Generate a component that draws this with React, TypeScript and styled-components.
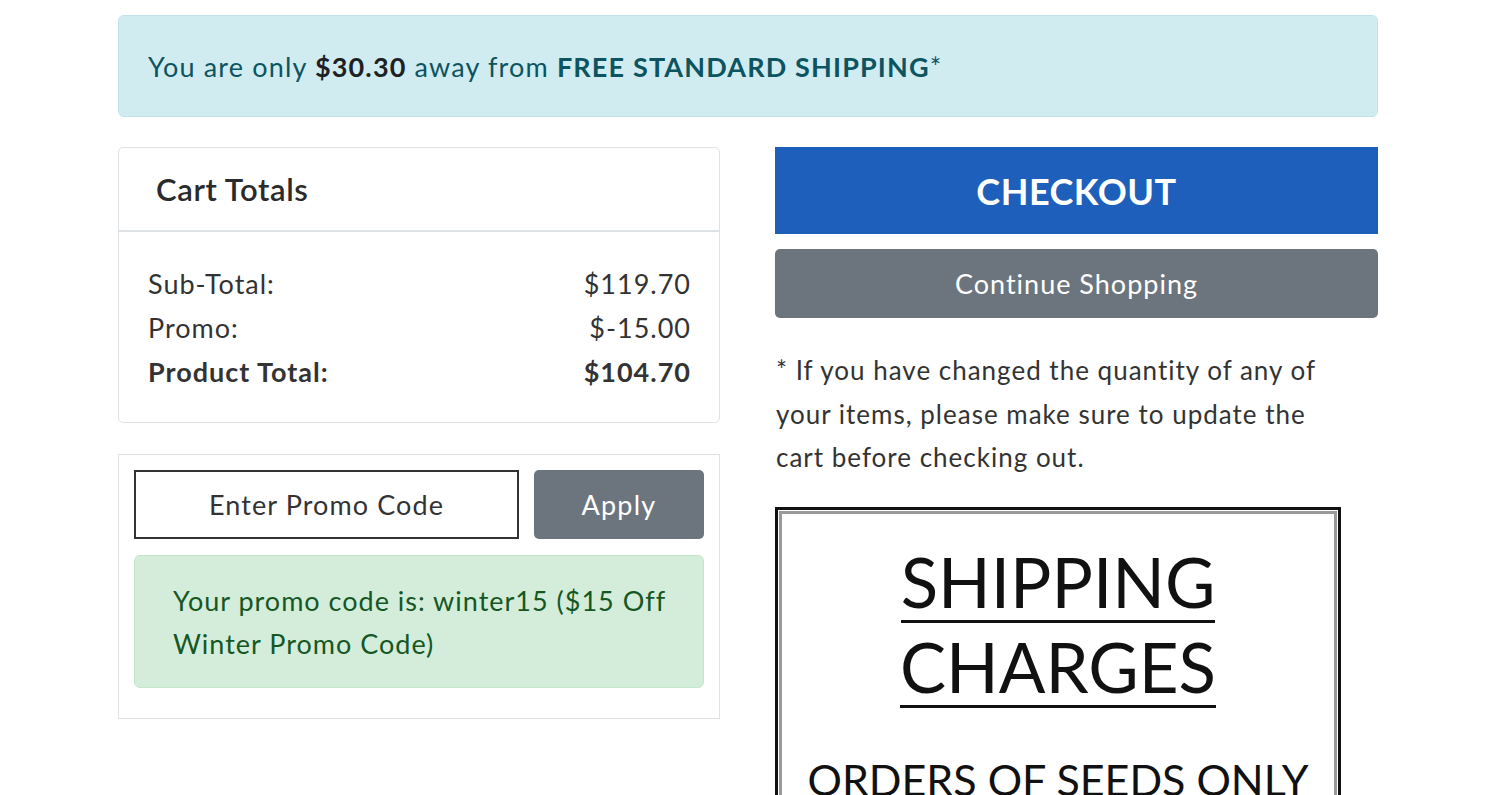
import React from "react";
import styled, { createGlobalStyle } from "styled-components";

const GlobalStyle = createGlobalStyle`
  body {
    margin: 0;
    background: #ffffff;
    font-family: Lato, "Open Sans", sans-serif;
    color: #333333;
  }
`;

const Page = styled.div`
  width: 1260px;
  padding: 15px 0 0 118px;
`;

const InfoBar = styled.div`
  height: 102px;
  box-sizing: border-box;
  border: 1px solid #bee5eb;
  border-radius: 6px;
  background: #d1ecf1;
  color: #0c5460;
  font-size: 27px;
  letter-spacing: 1.15px;
  display: flex;
  align-items: center;
  padding-left: 29px;
  margin-bottom: 30px;
`;

const Strong = styled.b<{ dark?: boolean }>`
  font-weight: 700;
  color: ${(p) => (p.dark ? "#1d2124" : "#0c5460")};
`;

const Columns = styled.div`
  display: grid;
  grid-template-columns: 602px 603px;
  justify-content: space-between;
  align-items: start;
`;

const Column = styled.div`
  display: flex;
  flex-direction: column;
`;

const Card = styled.div`
  border: 1px solid #dfe2e5;
  border-radius: 5px;
  background: #fff;
`;

const CardHeader = styled.div`
  height: 84px;
  box-sizing: border-box;
  border-bottom: 2px solid #dfe2e5;
  display: flex;
  align-items: center;
  padding-left: 37px;
  font-size: 31px;
  font-weight: 600;
  letter-spacing: 0.6px;
  color: #2b2b2b;
`;

const CardBody = styled.div`
  padding: 30px 28px 28px 29px;
`;

const TotalRow = styled.div<{ bold?: boolean }>`
  display: flex;
  justify-content: space-between;
  font-size: 27px;
  line-height: 44px;
  letter-spacing: 1px;
  font-weight: ${(p) => (p.bold ? 700 : 400)};
  color: #333;
`;

const PromoCard = styled.div`
  margin-top: 31px;
  border: 1px solid #dfe2e5;
  padding: 15px 15px 30px 15px;
`;

const PromoForm = styled.div`
  display: flex;
  gap: 15px;
`;

const PromoInput = styled.div`
  width: 385px;
  height: 69px;
  box-sizing: border-box;
  border: 2px solid #333;
  display: flex;
  align-items: center;
  justify-content: center;
  font-size: 27px;
  letter-spacing: 1.1px;
  color: #333;
`;

const GreyButton = styled.button`
  height: 69px;
  border: none;
  border-radius: 5px;
  background: #6c757d;
  color: #fff;
  font-family: Lato, sans-serif;
  font-size: 27px;
  letter-spacing: 1px;
  padding: 0;
`;

const ApplyButton = styled(GreyButton)`
  width: 170px;
  letter-spacing: 1.2px;
`;

const SuccessBox = styled.div`
  margin-top: 16px;
  border: 1px solid #c3e6cb;
  border-radius: 6px;
  background: #d4edda;
  color: #155724;
  font-size: 27px;
  letter-spacing: 1px;
  line-height: 43px;
  padding: 23px 30px 22px 38px;
`;

const CheckoutButton = styled.button`
  height: 87px;
  border: none;
  background: #1e5fbb;
  color: #fff;
  font-family: Lato, sans-serif;
  font-weight: 700;
  font-size: 36px;
  letter-spacing: 0.5px;
  padding: 0;
`;

const ContinueButton = styled(GreyButton)`
  margin-top: 15px;
  width: 100%;
`;

const Note = styled.p`
  max-width: 565px;
  margin: 31px 0 0 1px;
  font-size: 26px;
  letter-spacing: 1px;
  line-height: 43.5px;
  color: #333;
`;

const Poster = styled.div`
  margin-top: 27px;
  width: 566px;
  height: 320px;
  box-sizing: border-box;
  border: 3px solid #111;
  padding: 1px;
`;

const PosterInner = styled.div`
  height: 100%;
  box-sizing: border-box;
  border: 3px solid #9a9a9a;
  display: flex;
  flex-direction: column;
  align-items: center;
  padding-top: 30px;
  color: #111;
`;

const PosterTitle = styled.div`
  font-size: 69px;
  line-height: 76px;
  border-bottom: 3px solid #111;
  margin-bottom: 6px;
`;

const PosterLine = styled.div`
  margin-top: 41px;
  font-size: 43px;
  line-height: 50px;
  white-space: nowrap;
`;

export default function App() {
  return (
    <>
      <GlobalStyle />
      <Page>
        <InfoBar>
          <span>
            You are only <Strong dark>$30.30</Strong> away from{" "}
            <Strong>FREE STANDARD SHIPPING</Strong>*
          </span>
        </InfoBar>
        <Columns>
          <Column>
            <Card>
              <CardHeader>Cart Totals</CardHeader>
              <CardBody>
                <TotalRow>
                  <span>Sub-Total:</span>
                  <span>$119.70</span>
                </TotalRow>
                <TotalRow>
                  <span>Promo:</span>
                  <span>$-15.00</span>
                </TotalRow>
                <TotalRow bold>
                  <span>Product Total:</span>
                  <span>$104.70</span>
                </TotalRow>
              </CardBody>
            </Card>
            <PromoCard>
              <PromoForm>
                <PromoInput>Enter Promo Code</PromoInput>
                <ApplyButton>Apply</ApplyButton>
              </PromoForm>
              <SuccessBox>
                Your promo code is: winter15 ($15 Off Winter Promo Code)
              </SuccessBox>
            </PromoCard>
          </Column>
          <Column>
            <CheckoutButton>CHECKOUT</CheckoutButton>
            <ContinueButton>Continue Shopping</ContinueButton>
            <Note>
              * If you have changed the quantity of any of your items, please
              make sure to update the cart before checking out.
            </Note>
            <Poster>
              <PosterInner>
                <PosterTitle>SHIPPING</PosterTitle>
                <PosterTitle>CHARGES</PosterTitle>
                <PosterLine>ORDERS OF SEEDS ONLY</PosterLine>
              </PosterInner>
            </Poster>
          </Column>
        </Columns>
      </Page>
    </>
  );
}
